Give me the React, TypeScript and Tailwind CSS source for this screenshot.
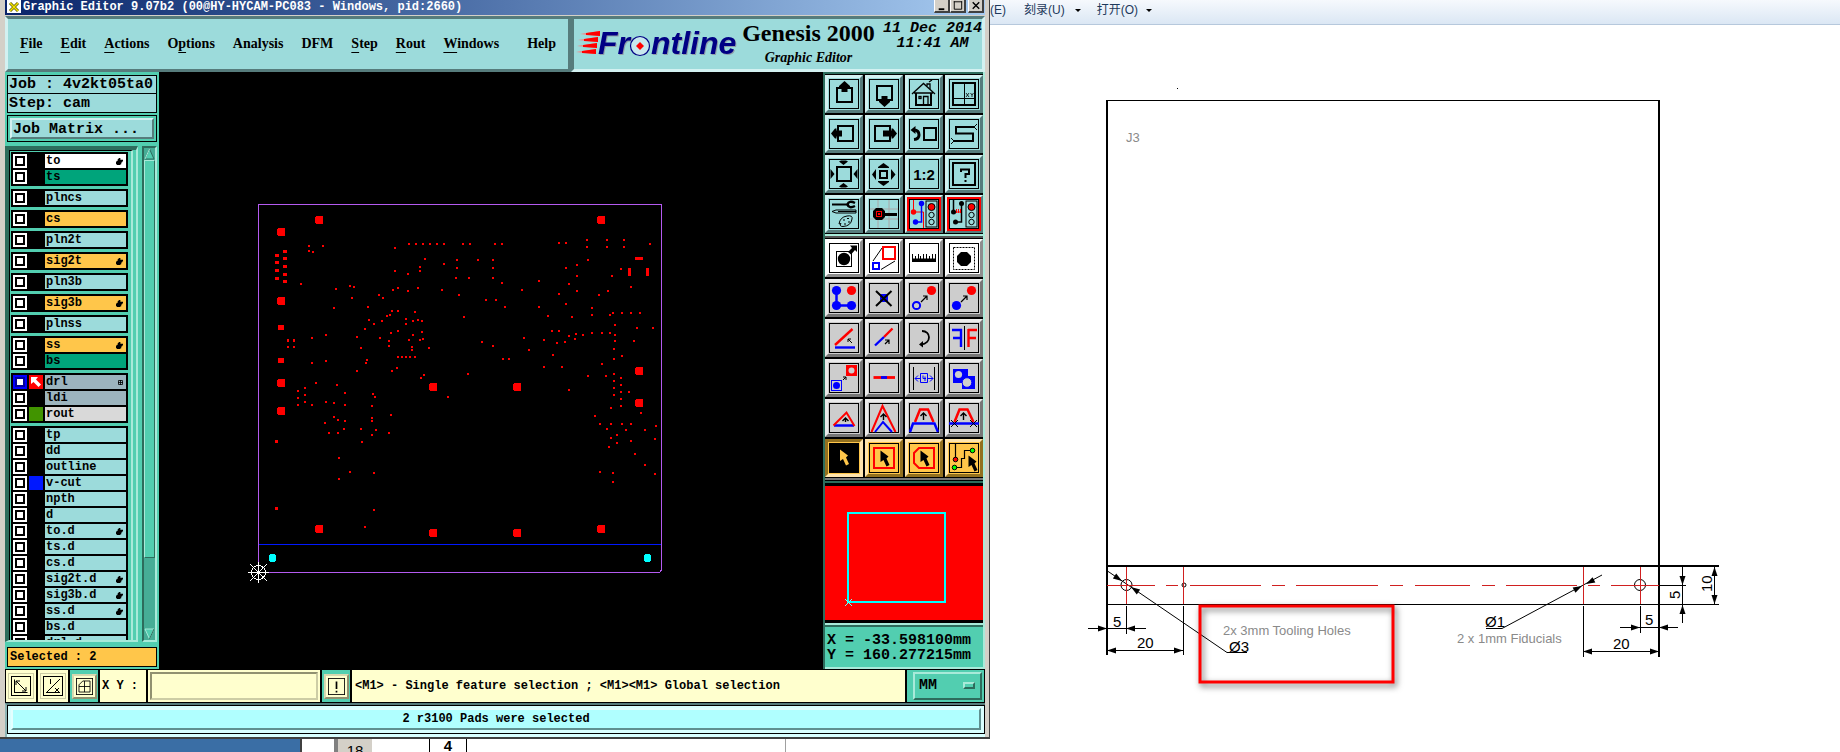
import type { ReactNode } from 'react';

type Layer = {
  name: string;
  tone?: string;
  swatch?: string;
  mark?: 'hand' | 'grid';
  active?: boolean;
};

const WHITE = 'bg-white';
const GREEN = 'bg-[#00a47b]';
const AMBER = 'bg-[#ffc64a]';
const SLATE = 'bg-[#9cb4be]';

const layerGroups: Layer[][] = [
  [
    { name: 'to', tone: WHITE, mark: 'hand' },
    { name: 'ts', tone: GREEN },
  ],
  [{ name: 'plncs' }],
  [{ name: 'cs', tone: AMBER }],
  [{ name: 'pln2t' }],
  [{ name: 'sig2t', tone: AMBER, mark: 'hand' }],
  [{ name: 'pln3b' }],
  [{ name: 'sig3b', tone: AMBER, mark: 'hand' }],
  [{ name: 'plnss' }],
  [
    { name: 'ss', tone: AMBER, mark: 'hand' },
    { name: 'bs', tone: GREEN },
  ],
  [
    { name: 'drl', tone: SLATE, swatch: 'bg-[#ff0000]', mark: 'grid', active: true },
    { name: 'ldi', tone: SLATE },
    { name: 'rout', tone: 'bg-[#d9d9d9]', swatch: 'bg-[#419400]' },
  ],
  [
    { name: 'tp' },
    { name: 'dd' },
    { name: 'outline' },
    { name: 'v-cut', swatch: 'bg-[#0018ff]' },
    { name: 'npth' },
    { name: 'd' },
    { name: 'to.d', mark: 'hand' },
    { name: 'ts.d' },
    { name: 'cs.d' },
    { name: 'sig2t.d', mark: 'hand' },
    { name: 'sig3b.d', mark: 'hand' },
    { name: 'ss.d', mark: 'hand' },
    { name: 'bs.d' },
    { name: 'drl.d' },
  ],
];

// [before, underlined, after]
const menus: [string, string, string][] = [
  ['', 'F', 'ile'],
  ['', 'E', 'dit'],
  ['', 'A', 'ctions'],
  ['O', 'p', 'tions'],
  ['Analysis', '', ''],
  ['DFM', '', ''],
  ['', 'S', 'tep'],
  ['', 'R', 'out'],
  ['', 'W', 'indows'],
];

// Drill hits, three plot units to a pixel
const westHits = [
  [207, 168], [249, 168], [207, 183], [219, 186], [183, 282], [288, 297], [330, 288], [342, 291],
  [336, 324], [282, 354], [384, 351], [387, 390], [402, 402], [375, 417], [351, 441], [363, 474],
  [216, 444], [258, 435], [162, 471], [144, 471], [216, 519], [258, 513], [381, 510], [378, 519],
  [351, 543], [228, 579], [291, 585], [315, 609], [315, 645], [195, 594], [195, 615], [195, 636],
  [174, 603], [174, 624], [174, 645], [216, 645], [258, 636], [282, 639], [282, 681], [294, 690],
  [315, 693], [255, 699], [312, 717], [267, 729], [294, 729], [363, 717], [396, 648], [396, 684],
  [396, 693], [408, 720], [396, 735], [366, 756], [399, 612], [405, 621], [453, 675], [447, 729],
  [297, 804], [330, 846], [297, 867], [402, 849], [402, 960], [375, 1011], [465, 174], [507, 162],
  [528, 162], [549, 162], [570, 162], [591, 162], [612, 162], [555, 207], [612, 222], [540, 231],
  [540, 243], [465, 243], [504, 252], [459, 300], [474, 294], [504, 303], [534, 294], [606, 300],
  [417, 315], [429, 324], [456, 363], [474, 363], [441, 378], [450, 375], [525, 366], [426, 393],
  [498, 387], [498, 402], [519, 393], [534, 390], [546, 393], [474, 423], [453, 429], [420, 444],
  [447, 453], [447, 468], [519, 435], [546, 426], [507, 450], [540, 450], [549, 447], [516, 471],
  [516, 480], [567, 474], [474, 501], [486, 501], [498, 501], [510, 501], [525, 501], [471, 534],
  [456, 543], [552, 555], [543, 564], [624, 621],
];

const eastHits = [
  [327, 159], [348, 159], [411, 150], [411, 171], [471, 150], [471, 171], [522, 150], [522, 171],
  [600, 162], [21, 210], [21, 234], [18, 264], [57, 264], [84, 210], [129, 210], [129, 234],
  [129, 264], [156, 279], [27, 315], [108, 330], [138, 330], [165, 351], [42, 381], [216, 300],
  [267, 273], [267, 351], [294, 378], [327, 312], [348, 342], [357, 282], [348, 234], [381, 225],
  [381, 258], [381, 303], [414, 210], [366, 381], [447, 315], [474, 303], [486, 258], [513, 237],
  [543, 291], [426, 354], [426, 375], [480, 375], [489, 369], [516, 369], [543, 369], [570, 369],
  [495, 405], [561, 414], [609, 414], [306, 423], [327, 423], [222, 444], [282, 450], [321, 459],
  [345, 456], [357, 438], [378, 432], [375, 447], [399, 435], [426, 429], [456, 429], [480, 429],
  [495, 435], [495, 453], [552, 453], [96, 456], [129, 468], [159, 507], [177, 507], [237, 480],
  [309, 495], [282, 531], [336, 531], [492, 477], [492, 507], [516, 498], [456, 522], [54, 552],
  [414, 558], [468, 558], [492, 552], [492, 573], [492, 594], [492, 615], [513, 564], [513, 585],
  [513, 606], [513, 627], [513, 648], [537, 606], [357, 600], [483, 654], [573, 669], [435, 678],
  [450, 702], [483, 702], [516, 702], [543, 702], [471, 717], [528, 720], [585, 720], [618, 708],
  [501, 735], [483, 744], [501, 759], [543, 753], [615, 747], [477, 771], [555, 792], [585, 825],
  [615, 852], [450, 846], [489, 849], [489, 876], [39, 163], [59, 163], [134, 163], [155, 163],
];

const bigPads = [
  [319, 220], [281, 232], [281, 301], [281, 383], [281, 411], [433, 387], [517, 387], [601, 220],
  [639, 371], [639, 403], [319, 529], [433, 533], [517, 533], [601, 529],
];

const slotPads = [
  [285, 251], [277, 255], [285, 258], [277, 262], [285, 266], [277, 270], [285, 274], [277, 278],
  [285, 281],
];

function Stroke({ children }: { children: ReactNode }) {
  return (
    <g fill="none" stroke="#000" strokeWidth={2}>
      {children}
    </g>
  );
}

function Cursor({ x, y, fill = '#000' }: { x: number; y: number; fill?: string }) {
  return (
    <path
      d="M0 0 L8 6 L6 8 L9 14.5 L6 16 L3 9.5 L0 11.5 Z"
      transform={`translate(${x} ${y})`}
      fill={fill}
    />
  );
}

function TrafficLight() {
  return (
    <g fill="none" stroke="#000">
      <rect x={17} y={2} width={11} height={26} />
      <circle cx={22.5} cy={8} r={3.5} fill="#f00" />
      <circle cx={22.5} cy={16} r={2.7} />
      <circle cx={22.5} cy={23} r={2.7} />
    </g>
  );
}

function DiagonalArrow({ x, y, size = 6 }: { x: number; y: number; size?: number }) {
  return (
    <path
      d={`M${x} ${y} l${size} -${size} m-4 0 h4 v4`}
      fill="none"
      stroke="#000"
      strokeWidth={1.2}
    />
  );
}

function UpArrow({ x, y, h }: { x: number; y: number; h: number }) {
  return (
    <path
      d={`M${x} ${y + h} v-${h} m-3 3 l3 -3 l3 3`}
      fill="none"
      stroke="#000"
      strokeWidth={1.4}
    />
  );
}

type Tool = { label: string; icon: ReactNode; alert?: boolean; pressed?: boolean };

const viewTools: Tool[] = [
  {
    label: 'Pan up',
    icon: (
      <>
        <Stroke><rect x={8} y={9} width={15} height={14} /></Stroke>
        <path d="M15.5 2 L21 7 V8 H18.5 V13 H12.5 V8 H10 V7 Z" />
      </>
    ),
  },
  {
    label: 'Pan down',
    icon: (
      <>
        <Stroke><rect x={8} y={7} width={15} height={14} /></Stroke>
        <path d="M15.5 28 L21 23 V22 H18.5 V17 H12.5 V22 H10 V23 Z" />
      </>
    ),
  },
  {
    label: 'Home',
    icon: (
      <g fill="none" stroke="#000" strokeWidth={1.3}>
        <path d="M3 15 L14.5 4.5 L26 15 M5 14 H24" />
        <path d="M18 7 V5 H21 V10 M20 3 l3 -2" />
        <path d="M7 14 V26 H22 V14" strokeWidth={2} />
        <rect x={10} y={17.5} width={2} height={2} />
        <path d="M14.5 26 V17.5 H19 V26" />
      </g>
    ),
  },
  {
    label: 'Coordinates',
    icon: (
      <>
        <Stroke><rect x={4} y={4} width={22} height={22} /></Stroke>
        <path d="M15.5 4 V26 M4 19.5 H26" stroke="#000" />
        <path d="M17 14 l3 4 m0 -4 l-3 4 M21.5 14 l1.5 2 v2 m0 -2 l1.5 -2" stroke="#000" strokeWidth={0.8} fill="none" />
      </>
    ),
  },
  {
    label: 'Pan left',
    icon: (
      <>
        <Stroke><rect x={9} y={7} width={15} height={15} /></Stroke>
        <path d="M2 14.5 L6 9.5 H7.5 V11.5 H13 V17.5 H7.5 V19.5 H6 Z" />
      </>
    ),
  },
  {
    label: 'Pan right',
    icon: (
      <>
        <Stroke><rect x={6} y={7} width={15} height={15} /></Stroke>
        <path d="M28 14.5 L24 9.5 H22.5 V11.5 H14 V17.5 H22.5 V19.5 H24 Z" />
      </>
    ),
  },
  {
    label: 'Previous view',
    icon: (
      <>
        <Stroke>
          <rect x={15} y={9} width={12} height={12} />
          <path d="M5 11 Q10 11 10 16 Q10 20 5 20.5" strokeWidth={3} />
        </Stroke>
        <path d="M1.5 11 L6.5 7 V15 Z" />
      </>
    ),
  },
  {
    label: 'Serpentine',
    icon: (
      <Stroke>
        <path d="M25 8 H7 V14.5 H24 V22 H5" />
        <path d="M28 5 L25 8 L28 11 M2 19 L5 22 L2 25" strokeWidth={1} />
      </Stroke>
    ),
  },
  {
    label: 'Zoom in',
    icon: (
      <>
        <Stroke><rect x={8} y={8} width={14} height={14} /></Stroke>
        <path d="M10 2.5 L12 1.5 H17 L19 2.5 L14.5 6 Z M10 27.5 L12 28.5 H17 L19 27.5 L14.5 24 Z M1.5 10 V20 L5.5 15 Z M28.5 10 V20 L24.5 15 Z" />
      </>
    ),
  },
  {
    label: 'Zoom out',
    icon: (
      <>
        <Stroke><rect x={11} y={12} width={7} height={7} /></Stroke>
        <path d="M9 8 L14.5 4 L20 8 V9 H9 Z M9 23 L14.5 27 L20 23 V22 H9 Z M7 10 L3 15.5 L7 21 Z M22 10 L26.5 15.5 L22 21 Z" />
      </>
    ),
  },
  {
    label: 'Scale 1:2',
    icon: (
      <text x={15} y={20.5} textAnchor="middle" fontSize={15} fontWeight={700} fontFamily="Liberation Sans">
        1:2
      </text>
    ),
  },
  {
    label: 'Help',
    icon: (
      <Stroke>
        <rect x={4} y={4} width={22} height={22} />
        <path d="M12 13 V10.5 H20 V15 H16.5 V19 M16.5 21 V23" />
      </Stroke>
    ),
  },
  {
    label: 'Setup',
    icon: (
      <g fill="none" stroke="#000">
        <path d="M3 5.5 H19" strokeWidth={2} />
        <path d="M26 4 Q20 1 18.5 5.5 Q20 10 26 7" strokeWidth={2.5} />
        <path d="M3 12.5 L7 11 H27 V14 H7 Z M9 12.5 H27" />
        <path d="M10 25 Q11 18 18 17 Q24 16 23 20 Q22 27 14 27.5 Q10 27.5 12 24.5 Z" />
        <path d="M14 21 h2 M18 19.5 h2 M19 23 h2 M15 25 h2" />
      </g>
    ),
  },
  {
    label: 'Snap grid',
    icon: (
      <>
        <path d="M9 1 V29 M20 1 V29 M1 10 H29 M1 20 H29" stroke="#a8a8a8" />
        <path d="M4 12 L7 9 H13 L16 12 V14 H28 V17 H16 V18 L13 21 H7 L4 18 Z" />
        <rect x={7.5} y={12.5} width={5} height={5} fill="none" stroke="#f00" />
        <rect x={9} y={14} width={2} height={2} fill="#f00" />
      </>
    ),
  },
  {
    label: 'Net colours',
    alert: true,
    icon: (
      <>
        <path d="M4.5 1 V12 M5 13 H14.5 V29" fill="none" stroke="#f00" />
        <path d="M12.5 5 V23 H7" fill="none" stroke="#00f" strokeWidth={1.5} />
        <circle cx={4.5} cy={13} r={2.7} fill="#f00" />
        <circle cx={12.5} cy={4.5} r={2.7} fill="#00f" />
        <circle cx={6.5} cy={23} r={2.7} fill="#00f" />
        <TrafficLight />
      </>
    ),
  },
  {
    label: 'Net check',
    alert: true,
    icon: (
      <>
        <path d="M4.5 1 V13 M12.5 5 V23 H7" fill="none" stroke="#000" strokeWidth={1.5} />
        <path d="M5 13 H12 M7.5 10 V14 M9.5 10 V14 M11.5 10 V14" stroke="#f00" />
        <circle cx={4.5} cy={13} r={2.5} />
        <circle cx={12.5} cy={4.5} r={2.5} />
        <circle cx={6.5} cy={23} r={2.5} />
        <TrafficLight />
      </>
    ),
  },
];

const measureTools: Tool[] = [
  {
    label: 'Move pad',
    icon: (
      <>
        <rect x={7.5} y={8.5} width={15} height={15} fill="none" stroke="#000" />
        <circle cx={15} cy={16} r={6.2} />
        <path d="M19 9 L23 5 L21 2.5 H28 V9 L26 7 L22 11.5 Z" />
      </>
    ),
  },
  {
    label: 'Resize',
    icon: (
      <>
        <path d="M13 5 L4 18 M26 18 L12 26.5" stroke="#000" />
        <rect x={14} y={4} width={12} height={12} fill="none" stroke="#f00" strokeWidth={2} />
        <rect x={4} y={20} width={6} height={6} fill="none" stroke="#00f" strokeWidth={2} />
      </>
    ),
  },
  {
    label: 'Ruler',
    icon: (
      <>
        <path d="M3 15.5 H27 V19 H3 Z" />
        <path d="M3.5 11 V16 M6.5 13 V16 M9.5 11 V16 M11.5 13 V16 M14.5 11 V16 M17.5 11 V16 M20.5 13 V16 M23.5 11 V16 M26.5 11 V16" stroke="#000" />
      </>
    ),
  },
  {
    label: 'Select pad',
    icon: (
      <>
        <rect x={4.5} y={4.5} width={21} height={22} fill="none" stroke="#000" strokeDasharray="2 1" />
        <path d="M12 9 H18 L22 13 V19 L18 23 H12 L8 19 V13 Z" />
      </>
    ),
  },
];

const editTools: Tool[] = [
  {
    label: 'Copy nodes',
    icon: (
      <>
        <path d="M7.5 7.5 V22.5 H22.5" stroke="#00f" strokeWidth={2.5} fill="none" />
        <circle cx={7.5} cy={7.5} r={4.6} fill="#00f" />
        <circle cx={7.5} cy={22.5} r={4.6} fill="#00f" />
        <circle cx={22.5} cy={22.5} r={4.6} fill="#00f" />
        <circle cx={22.5} cy={7.5} r={4.6} fill="#f00" />
      </>
    ),
  },
  {
    label: 'Delete',
    icon: (
      <>
        <rect x={11} y={11} width={8} height={8} fill="#00f" />
        <path d="M7 8 L22.5 23 M22.5 8 L7 23" stroke="#000" strokeWidth={2} />
      </>
    ),
  },
  {
    label: 'Move point',
    icon: (
      <>
        <circle cx={22.5} cy={7.5} r={4.6} fill="#f00" />
        <circle cx={7.5} cy={22.5} r={3.6} fill="none" stroke="#00f" strokeWidth={2} />
        <DiagonalArrow x={12} y={19} />
      </>
    ),
  },
  {
    label: 'Copy point',
    icon: (
      <>
        <circle cx={22.5} cy={7.5} r={4.6} fill="#f00" />
        <circle cx={7.5} cy={22.5} r={4.6} fill="#00f" />
        <DiagonalArrow x={12} y={19} />
      </>
    ),
  },
  {
    label: 'Angle',
    icon: (
      <>
        <path d="M6 22 L23.5 6" stroke="#f00" strokeWidth={2.4} />
        <path d="M6 24.5 H26" stroke="#00f" strokeWidth={2.4} />
        <path d="M23 20 l-4 -4 m0 3 v-3 h3" stroke="#000" fill="none" />
      </>
    ),
  },
  {
    label: 'Extend line',
    icon: (
      <>
        <path d="M15 14 L23.5 5.5" stroke="#f00" strokeWidth={2.4} />
        <path d="M6 22.5 L15 14" stroke="#00f" strokeWidth={2.4} />
        <DiagonalArrow x={16} y={21} size={4} />
      </>
    ),
  },
  {
    label: 'Rotate',
    icon: (
      <>
        <path d="M13 8 C22 8 23 20 12 21.5" stroke="#000" strokeWidth={1.8} fill="none" />
        <path d="M14 18 L10 21.5 L14 24.5 Z" />
      </>
    ),
  },
  {
    label: 'Mirror',
    icon: (
      <>
        <path d="M3 7 H13 M4 15 H13 M12 6 V24" stroke="#00f" strokeWidth={2.4} fill="none" />
        <path d="M15.5 3 V27" stroke="#000" />
        <path d="M28 7 H19 M27 15 H19 M19.5 6 V24" stroke="#f00" strokeWidth={2.4} fill="none" />
      </>
    ),
  },
  {
    label: 'Substitute',
    icon: (
      <>
        <rect x={17} y={2} width={11} height={11} fill="#f00" />
        <circle cx={22.5} cy={7.5} r={3} fill="#cdcdcd" />
        <rect x={2.5} y={17.5} width={10} height={10} fill="none" stroke="#00f" />
        <circle cx={7.5} cy={22.5} r={3.5} fill="#00f" />
        <path d="M14 17 l3 -3 m-3 0 h3 v3" fill="none" stroke="#000" />
      </>
    ),
  },
  {
    label: 'Break line',
    icon: (
      <>
        <path d="M4.5 14.5 H26" stroke="#f00" strokeWidth={2.8} />
        <path d="M12 14.5 H18" stroke="#00f" strokeWidth={2.8} />
      </>
    ),
  },
  {
    label: 'Spacing',
    icon: (
      <>
        <path d="M4.5 4 V27 M25.5 4 V27" stroke="#000" />
        <path d="M6 15.5 H11 M9 12.5 l-3 3 l3 3 M24 15.5 H19 M21 12.5 l3 3 l-3 3 M11.5 10.5 H18.5 V19.5 H11.5 Z M14 12.5 V15.5 H17 M16 13.5 V18" stroke="#00f" fill="none" />
      </>
    ),
  },
  {
    label: 'Merge surface',
    icon: (
      <>
        <path d="M4 6 H19 V13 H26 V26 H13 V20 H4 Z" fill="#00f" />
        <circle cx={9.5} cy={11.5} r={3.6} fill="#cdcdcd" />
        <circle cx={18} cy={19.5} r={4.8} fill="#cdcdcd" stroke="#00f" />
      </>
    ),
  },
  {
    label: 'Stretch corner',
    icon: (
      <>
        <path d="M5 22.5 H25" stroke="#00f" strokeWidth={2.5} />
        <path d="M4.5 22.5 L17.5 9.5 L25.5 23" stroke="#f00" strokeWidth={2} fill="none" />
        <UpArrow x={16.5} y={15} h={4} />
      </>
    ),
  },
  {
    label: 'Stretch peak',
    icon: (
      <>
        <path d="M6 29 L14 19 L23 29" stroke="#00f" strokeWidth={2} fill="none" />
        <path d="M2.5 29 L13.5 3 L26.5 29" stroke="#f00" strokeWidth={2} fill="none" />
        <UpArrow x={14.5} y={11} h={6} />
      </>
    ),
  },
  {
    label: 'Stretch segment',
    icon: (
      <>
        <path d="M6 19 L11 6.5 H19 L24.5 19" stroke="#f00" strokeWidth={2.5} fill="none" />
        <path d="M1 29 L4 20.5 H25.5 L29 29" stroke="#00f" strokeWidth={2.5} fill="none" />
        <UpArrow x={14.5} y={10} h={7} />
      </>
    ),
  },
  {
    label: 'Stretch parallel',
    icon: (
      <>
        <path d="M5.5 19 L10.5 6.5 H18.5 L24.5 19" stroke="#f00" strokeWidth={2.5} fill="none" />
        <path d="M0 20.5 H30" stroke="#00f" strokeWidth={2.5} />
        <path d="M2 17 l7 7 m0 -7 l-7 7 M21 17 l7 7 m0 -7 l-7 7" stroke="#000" />
        <UpArrow x={14.5} y={10} h={7} />
      </>
    ),
  },
];

const selectTools: Tool[] = [
  {
    label: 'Select single',
    pressed: true,
    icon: (
      <>
        <rect width={30} height={30} />
        <Cursor x={11} y={6.5} fill="#ffc64a" />
      </>
    ),
  },
  {
    label: 'Select in frame',
    icon: (
      <>
        <rect x={5} y={5} width={20} height={20} fill="none" stroke="#f00" strokeWidth={2} />
        <Cursor x={11.5} y={7.5} />
      </>
    ),
  },
  {
    label: 'Select in polygon',
    icon: (
      <>
        <path d="M10 5 H25 V25 H10 L5 20 V10 Z" fill="none" stroke="#f00" strokeWidth={2} />
        <Cursor x={11.5} y={7.5} />
      </>
    ),
  },
  {
    label: 'Select net',
    icon: (
      <>
        <path d="M6.5 1 V16 M6 24.5 H12.5 V15.5 H15.5 V7.5 H24" fill="none" stroke="#000" strokeWidth={1.2} />
        <circle cx={6.5} cy={16.5} r={2.3} fill="#f00" stroke="#000" />
        <circle cx={5.5} cy={24.5} r={2.3} fill="#0f0" stroke="#000" />
        <circle cx={23.5} cy={7.5} r={2.3} fill="#0f0" stroke="#000" />
        <Cursor x={19.5} y={12.5} />
      </>
    ),
  },
];

const toolTone = {
  aqua: 'bg-[#9cdbdb] border-t-[#d3f1f1] border-l-[#d3f1f1] border-b-[#567c7c] border-r-[#567c7c]',
  white: 'bg-white border-t-white border-l-white border-b-[#8e8e8e] border-r-[#8e8e8e]',
  grey: 'bg-[#cdcdcd] border-t-[#ececec] border-l-[#ececec] border-b-[#777777] border-r-[#777777]',
  amber: 'bg-[#ffc64a] border-t-[#ffe5ae] border-l-[#ffe5ae] border-b-[#92701f] border-r-[#92701f]',
};

const pressedTone =
  'bg-[#ffc64a] border-t-[#92701f] border-l-[#92701f] border-b-[#ffe5ae] border-r-[#ffe5ae]';

function ToolGrid({ tools, tone }: { tools: Tool[]; tone: keyof typeof toolTone }) {
  return (
    <div className="grid grid-cols-4 gap-[2px]">
      {tools.map((tool) => (
        <button
          key={tool.label}
          type="button"
          aria-label={tool.label}
          className={`flex h-[38px] items-center justify-center border-3 ${
            tool.pressed ? pressedTone : toolTone[tone]
          }`}
        >
          <svg
            viewBox="0 0 30 30"
            className={
              tool.alert
                ? 'size-[30px] shrink-0 outline-2 outline-[#ff0000]'
                : 'size-[30px] shrink-0'
            }
          >
            <rect x={0.5} y={0.5} width={29} height={29} fill="none" stroke="#000" />
            {tool.icon}
          </svg>
        </button>
      ))}
    </div>
  );
}

function TitleBar() {
  return (
    <header className="flex h-[15px] items-start bg-linear-to-r from-[#0a246a] to-[#a6caf0] pr-px pl-[2px]">
      <svg viewBox="0 0 14 13" className="mr-[2px] h-[13px] w-[14px]">
        <rect width={14} height={13} fill="#fff" />
        <path d="M3 3 L11 11 M11 3 L3 11" stroke="#5c5c00" strokeWidth={3} />
        <path d="M3 3 L11 11 M11 3 L3 11" stroke="#f4e200" strokeWidth={1.5} />
      </svg>
      <h1 className="flex-1 text-[12px] leading-[14px] font-bold whitespace-nowrap text-white">
        Graphic Editor 9.07b2 (00@HY-HYCAM-PC083 - Windows, pid:2660)
      </h1>
      <WindowButton label="Minimize">
        <path d="M4 9.5 H10" stroke="#000" strokeWidth={2} />
      </WindowButton>
      <WindowButton label="Maximize">
        <path d="M3.5 1 V9.5 H11.5 V1 M3 1.5 H12" stroke="#000" fill="none" />
      </WindowButton>
      <span className="w-[2px]" />
      <WindowButton label="Close">
        <path d="M4 2 L11 9 M11 2 L4 9" stroke="#000" strokeWidth={1.5} />
      </WindowButton>
    </header>
  );
}

function WindowButton({ label, children }: { label: string; children: ReactNode }) {
  return (
    <button
      type="button"
      aria-label={label}
      className="h-[13px] w-[16px] border-r-2 border-b-2 border-l border-r-[#404040] border-b-[#404040] border-l-white bg-[#d4d0c8]"
    >
      <svg viewBox="0 0 14 11" className="h-[11px] w-[13px]">
        {children}
      </svg>
    </button>
  );
}

function FrontlineLogo() {
  return (
    <svg viewBox="0 -4 164 40" className="h-[40px] w-[164px] shrink-0">
      <path d="M4 6 L24 3 V8 Z M2 12 L22 9 V14 Z M1 18 L21 15 V20 Z M0 24 L20 21 V26 Z" fill="#ff7a7a" />
      <path d="M10 5 L24 3 V8 L10 7 Z M8 11 L22 9 V14 L8 13 Z M7 17 L21 15 V20 L7 19 Z M6 23 L20 21 V26 L6 25 Z" fill="#f00" />
      <g
        fontFamily="Liberation Sans"
        fontSize={32}
        fontWeight={700}
        fontStyle="italic"
        fill="#000084"
        className="drop-shadow-[1px_1px_0_#8f9fa8]"
      >
        <text x={22} y={26}>Fr</text>
        <text x={75} y={26}>ntline</text>
      </g>
      <circle cx={64} cy={18} r={9.5} fill="#c8e8ee" stroke="#000084" strokeWidth={1.2} />
      <path d="M64 14 L68 18 L64 22 L60 18 Z" fill="#f00" />
    </svg>
  );
}

function MenuRow() {
  return (
    <div className="grid h-[56px] grid-cols-[283fr_207fr] bg-[#9cdbdb]">
      <nav className="flex items-center gap-[18px] border-3 border-t-[#567c7c] border-r-[#567c7c] border-b-[#567c7c] border-l-[#d3f1f1] px-[12px] pb-px font-['Liberation_Serif',serif] text-[14px] font-bold">
        {menus.map(([before, key, after]) => (
          <button key={before + key + after} type="button">
            {before}
            <span className="underline underline-offset-4">{key}</span>
            {after}
          </button>
        ))}
        <button type="button" className="ml-auto">
          Help
        </button>
      </nav>
      <div className="flex items-center border-3 border-t-[#567c7c] border-r-[#d3f1f1] border-b-[#d3f1f1] border-l-[#567c7c] pl-[2px]">
        <FrontlineLogo />
        <div className="flex-1 pr-[6px] text-center font-['Liberation_Serif',serif] font-bold whitespace-nowrap">
          <p className="text-[24px] leading-[27px]">Genesis 2000</p>
          <p className="text-[14px] leading-[22px] italic">Graphic Editor</p>
        </div>
        <p className="self-start pt-[2px] text-center text-[15px] leading-[15px] font-bold italic">
          11 Dec 2014
          <br />
          11:41 AM
        </p>
      </div>
    </div>
  );
}

function LayerRow({ layer }: { layer: Layer }) {
  return (
    <label className="flex h-[14px] gap-[2px]">
      <input
        type="checkbox"
        className={`size-[14px] shrink-0 appearance-none border-2 bg-white ${
          layer.active
            ? 'border-[#0000ff] shadow-[inset_0_0_0_2px_#00009c]'
            : 'border-white shadow-[inset_0_0_0_2px_#000]'
        }`}
      />
      <span className={`size-[14px] shrink-0 ${layer.swatch ?? 'bg-black'}`}>
        {layer.active && (
          <svg viewBox="0 0 14 14">
            <path d="M2 2 H9 L7 4.5 L12 9.5 L9.5 12 L4.5 7 L2 9 Z" fill="#fff" />
          </svg>
        )}
      </span>
      <span
        className={`flex flex-1 items-center justify-between pr-[3px] pl-px text-[12px] leading-[14px] font-bold ${
          layer.tone ?? 'bg-[#9cdbdb]'
        }`}
      >
        {layer.name}
        {layer.mark === 'hand' && (
          <svg viewBox="0 0 8 8" className="size-[7px]">
            <path d="M3 0 H5 V2 H8 V4 H7 V5 H6 V7 H5 V8 H1 V7 H0 V4 H1 V3 H2 V1 H3 Z" />
          </svg>
        )}
        {layer.mark === 'grid' && (
          <svg viewBox="0 0 5 5" className="size-[5px]">
            <path d="M0.5 0.5 H4.5 V4.5 H0.5 Z M2.5 0 V5 M0 2.5 H5" fill="none" stroke="#000" strokeWidth={0.8} />
          </svg>
        )}
      </span>
    </label>
  );
}

function Sidebar() {
  return (
    <aside className="flex w-[154px] shrink-0 flex-col bg-[#52ceb0] px-[2px] pt-[3px] pb-[2px] font-bold">
      <p className="h-[19px] border border-black bg-[#9cdbdb] pl-px text-[15px] leading-[17px]">
        Job : 4v2kt05ta0
      </p>
      <p className="h-[19px] border-x border-b border-black bg-[#9cdbdb] pl-px text-[15px] leading-[19px]">
        Step: cam
      </p>
      <div className="mt-[2px] h-[27px] border border-black p-[2px]">
        <button
          type="button"
          className="block h-full w-full border-2 border-t-[#d3f1f1] border-r-[#567c7c] border-b-[#567c7c] border-l-[#d3f1f1] bg-[#9cdbdb] pl-px text-left text-[15px] leading-[19px]"
        >
          Job Matrix ...
        </button>
      </div>
      <div className="mt-[4px] -ml-[2px] flex h-[496px] gap-[4px]">
        <div className="flex flex-1 border-t-4 border-r-2 border-b-2 border-l-4 border-t-[#2d6c5c] border-r-[#a8ead9] border-b-[#a8ead9] border-l-[#2d6c5c] pr-[3px]">
          <div className="flex-1 overflow-hidden border-t border-r-2 border-l border-t-black border-r-[#a8ead9] border-l-black pt-px pr-[3px] pl-px">
            {layerGroups.map((group) => (
              <div key={group[0].name} className="mb-[3px] flex flex-col gap-[2px] bg-black p-[2px]">
                {group.map((layer) => (
                  <LayerRow key={layer.name} layer={layer} />
                ))}
              </div>
            ))}
          </div>
        </div>
        <div className="flex w-[15px] flex-col border-2 border-t-[#2d6c5c] border-r-[#a8ead9] border-b-[#a8ead9] border-l-[#2d6c5c] bg-[#46ad96]">
          <svg viewBox="0 0 11 12" className="h-[12px] w-[11px]">
            <path d="M5.5 1 L10 11 H1 Z" fill="#52ceb0" stroke="#2d6c5c" />
            <path d="M5.5 1 L1 11" stroke="#a8ead9" />
          </svg>
          <div className="h-[398px] border border-t-[#a8ead9] border-r-[#2d6c5c] border-b-[#2d6c5c] border-l-[#a8ead9] bg-[#52ceb0]" />
          <svg viewBox="0 0 11 12" className="mt-auto h-[12px] w-[11px]">
            <path d="M5.5 11 L10 1 H1 Z" fill="#52ceb0" stroke="#a8ead9" />
            <path d="M5.5 11 L10 1" stroke="#2d6c5c" />
          </svg>
        </div>
      </div>
      <p className="mt-auto h-[20px] border border-black bg-[#ffc64a] pl-[2px] text-[12px] leading-[18px]">
        Selected : 2
      </p>
    </aside>
  );
}

function BoardCanvas() {
  return (
    <main className="flex-1 bg-black">
      <svg viewBox="159 72 664 597" className="block h-full w-full" shapeRendering="crispEdges">
        <path d="M258.5 204.5 H661.5 V570 L659.5 572.5 H258.5 Z" fill="none" stroke="#b45af0" />
        <path d="M259 544.5 H661" stroke="#0018ff" />
        <g fill="#f00">
          <g transform="translate(240 190) scale(.33333333)">
            {westHits.map(([x, y]) => (
              <rect key={`${x}-${y}`} x={x - 3} y={y - 3} width={6} height={6} />
            ))}
          </g>
          <g transform="translate(450 190) scale(.33333333)">
            {eastHits.map(([x, y]) => (
              <rect key={`${x}-${y}`} x={x - 3} y={y - 3} width={6} height={6} />
            ))}
          </g>
          {slotPads.map(([x, y]) => (
            <rect key={y} x={x - 2} y={y - 1} width={4} height={3} />
          ))}
          <rect x={278} y={325} width={6} height={5} />
          <rect x={278} y={358} width={6} height={5} />
          <rect x={275} y={440} width={3} height={3} />
          <rect x={275} y={507} width={3} height={3} />
          <rect x={287} y={339} width={2} height={3} />
          <rect x={293} y={339} width={2} height={3} />
          <rect x={635} y={257} width={8} height={3} />
          <rect x={628} y={268} width={3} height={8} />
          <rect x={646} y={268} width={3} height={8} />
          {bigPads.map(([x, y]) => (
            <path key={`${x}-${y}`} d={`M${x - 3} ${y - 4} h6 l1 1 v6 l-1 1 h-6 l-1 -1 v-6 Z`} />
          ))}
        </g>
        <path d="M270 554 h4 l2 2 v4 l-2 2 h-4 l-1 -2 v-4 Z" fill="#0ff" />
        <path d="M645 554 h4 l2 2 v4 l-2 2 h-4 l-1 -2 v-4 Z" fill="#0ff" />
        <g fill="none" stroke="#fff">
          <path d="M248 572.5 H269 M258.5 562 V583 M250 564 L267 581 M267 564 L250 581" />
          <circle cx={258.5} cy={572.5} r={7} />
        </g>
      </svg>
    </main>
  );
}

function ToolPanel() {
  return (
    <section aria-label="Tools" className="flex w-[162px] shrink-0 flex-col border-r-2 border-l-2 border-r-[#a8ead9] border-l-[#2d6c5c] bg-black">
      <div className="border-t-2 border-b-2 border-t-[#2d6c5c] border-b-[#a8ead9] pt-px pb-px">
        <ToolGrid tools={viewTools} tone="aqua" />
      </div>
      <div className="flex flex-col gap-[2px] border-t-2 border-b-2 border-t-[#555555] border-b-[#777777] pt-px pb-px">
        <ToolGrid tools={measureTools} tone="white" />
        <ToolGrid tools={editTools} tone="grey" />
        <ToolGrid tools={selectTools} tone="amber" />
      </div>
      <div className="mt-px border-t-2 border-b-2 border-t-[#2d6c5c] border-b-[#a8ead9] py-[3px]">
        <svg viewBox="0 0 158 134" className="block h-[134px] w-full bg-[#ff0000]">
          <rect x={23} y={27} width={97} height={89} fill="none" stroke="#0ff" strokeWidth={2} />
          <path d="M20 113 l7 7 m0 -7 l-7 7" stroke="#7fe" />
        </svg>
      </div>
      <output className="flex-1 border-t-2 border-b-2 border-t-[#2d6c5c] border-b-[#a8ead9] bg-[#52ceb0] pt-[6px] pl-[2px] text-[15px] leading-[15px] font-bold whitespace-nowrap">
        X = -33.598100mm
        <br />
        Y = 160.277215mm
      </output>
    </section>
  );
}

function CommandButton({ label, teal, children }: { label: string; teal?: boolean; children: ReactNode }) {
  return (
    <button
      type="button"
      aria-label={label}
      className={
        teal
          ? 'flex w-[28px] items-center justify-center bg-[#52ceb0]'
          : 'flex w-[30px] items-center justify-center bg-[#ffffce]'
      }
    >
      <svg
        viewBox="0 0 20 20"
        className={
          teal
            ? 'box-content size-[17px] shrink-0 border-2 border-t-[#d8d8b0] border-r-[#919170] border-b-[#919170] border-l-[#d8d8b0] bg-[#ffffce] p-[2px]'
            : 'box-content size-[20px] shrink-0 border border-[#cdcda5] bg-[#ffffce] p-[2px]'
        }
      >
        <rect x={0.5} y={0.5} width={19} height={19} fill="none" stroke="#000" />
        {children}
      </svg>
    </button>
  );
}

function CommandRow() {
  return (
    <form className="flex h-[34px] gap-[2px] bg-black py-px pl-px text-[12px] font-bold">
      <CommandButton label="Diagonal">
        <path d="M3.5 16.5 V3.5 M3 16.5 H16.5 M5 5 L15 15 M5 9 V5 H9 M15 11 V15 H11" fill="none" stroke="#000" />
      </CommandButton>
      <CommandButton label="Angle">
        <path d="M3 17 L17 3 M3 16.5 H17 M7.5 3 V8 M12 12 l4 4 m0 -4 l-4 4" fill="none" stroke="#000" />
      </CommandButton>
      <CommandButton label="Grid" teal>
        <path d="M3.5 16.5 V8 L8 3.5 H16.5 V16.5 Z M10 3.5 V16.5 M3.5 10 H16.5" fill="none" stroke="#000" />
      </CommandButton>
      <label htmlFor="xy" className="flex w-[46px] items-center bg-[#ffffce] pl-[2px]">
        X Y :
      </label>
      <div className="w-[172px] bg-[#ffffce] p-[2px]">
        <input
          id="xy"
          type="text"
          className="h-full w-full border-2 border-t-[#919170] border-r-[#cdcda5] border-b-[#cdcda5] border-l-[#919170] bg-[#ffffce] px-[4px] outline-none"
        />
      </div>
      <CommandButton label="Alert" teal>
        <path d="M10 4 V13 M10 15 V17" stroke="#000" strokeWidth={2} />
      </CommandButton>
      <p className="flex flex-1 items-center bg-[#ffffce] pl-[3px] whitespace-pre">
        {'<M1> - Single feature selection ; <M1><M1> Global selection'}
      </p>
      <div className="relative mr-px w-[77px] bg-[#52ceb0] py-[2px] pr-[2px] pl-[6px]">
        <select
          aria-label="Units"
          className="h-full w-full appearance-none border-2 border-t-[#a8ead9] border-r-[#2d6c5c] border-b-[#2d6c5c] border-l-[#a8ead9] bg-[#52ceb0] pl-[4px] text-[15px]"
        >
          <option>MM</option>
        </select>
        <span className="pointer-events-none absolute top-[12px] right-[9px] h-[7px] w-[12px] border-2 border-t-[#a8ead9] border-r-[#2d6c5c] border-b-[#2d6c5c] border-l-[#a8ead9]" />
      </div>
    </form>
  );
}

function StatusBar() {
  return (
    <footer className="border-t-2 border-l-2 border-t-[#567c7c] border-l-[#8fb5b5] bg-[#d8ffff] pb-[3px]">
      <div className="border border-black p-[3px] pt-[2px]">
        <p className="h-[22px] border-2 border-t-[#e4ffff] border-r-[#5f9090] border-b-[#5f9090] border-l-[#e4ffff] bg-[#b0ffff] text-center text-[12px] leading-[18px] font-bold">
          2 r3100 Pads were selected
        </p>
      </div>
    </footer>
  );
}

function DesktopStrip() {
  return (
    <div className="flex flex-1 overflow-hidden bg-white font-['Liberation_Sans',sans-serif]">
      <div className="w-[302px] border-r-2 border-[#404040] bg-[#3a6ea5]" />
      <div className="ml-[32px] w-[38px] border-l-4 border-[#808080] bg-[#d4d0c8] pt-[4px] text-center text-[15px] leading-[16px]">
        18
      </div>
      <div className="ml-[57px] w-[38px] border-x border-black text-center text-[15px] leading-[14px] font-bold">
        4
      </div>
      <div className="ml-[318px] border-l border-[#a0a0a0]" />
    </div>
  );
}

function EditorWindow() {
  return (
    <section className="flex min-w-0 flex-col bg-[#d4d0c8] font-['Liberation_Mono',monospace] text-black">
      <div className="border-r border-b-2 border-[#404040]">
        <div className="border-r-4 border-l-5 border-[#d4d0c8]">
          <TitleBar />
          <div className="mt-px">
            <MenuRow />
          </div>
          <div className="flex h-[597px] bg-black">
            <Sidebar />
            <BoardCanvas />
            <ToolPanel />
          </div>
          <CommandRow />
          <StatusBar />
        </div>
      </div>
      <DesktopStrip />
    </section>
  );
}

// Filled arrowhead with its tip at x, y, pointing along `angle` degrees
function Head({ x, y, angle }: { x: number; y: number; angle: number }) {
  return <path d="M0 0 L-9 -3 V3 Z" transform={`translate(${x} ${y}) rotate(${angle})`} fill="#000" />;
}

function MechanicalDrawing() {
  return (
    <svg viewBox="990 25 850 727" className="block w-full font-['Liberation_Sans',sans-serif]">
      <rect x={1177} y={88} width={1} height={1} />
      <g fill="none" stroke="#000">
        <path d="M1107 100.5 H1659" />
        <path d="M1107 566 H1719 M1107 100 V655 M1659 100 V657" strokeWidth={2} />
        <path d="M1107 604.5 H1719 M1126.5 606 V634 M1183.5 606 V655 M1583.5 606 V657 M1640.5 606 V633 M1660 585.5 H1686" />
        <path d="M1088 628.5 H1146 M1107 650.5 H1183 M1620 627.5 H1678 M1583 651.5 H1659 M1682.5 567 V623 M1714.5 566 V604" />
        <path d="M1106 570 L1227 652.5 H1247 M1602 575 L1502 628.5 H1486" />
        <circle cx={1126.5} cy={585} r={5.5} />
        <circle cx={1184} cy={585} r={2} />
        <circle cx={1640} cy={585} r={5.5} />
      </g>
      <g stroke="#d02020">
        <path d="M1107 585.5 H1155 M1166 585.5 H1178 M1190 585.5 H1261 M1272 585.5 H1285 M1296 585.5 H1378 M1390 585.5 H1403 M1415 585.5 H1470 M1482 585.5 H1495 M1506 585.5 H1577 M1588 585.5 H1600 M1611 585.5 H1659" />
        <path d="M1126.5 567 V604 M1183.5 567 V604 M1583.5 567 V604 M1640.5 567 V604" />
      </g>
      <Head x={1122} y={581} angle={34} />
      <Head x={1131} y={587} angle={214} />
      <Head x={1107} y={628.5} angle={0} />
      <Head x={1126} y={628.5} angle={180} />
      <Head x={1107} y={650.5} angle={180} />
      <Head x={1183} y={650.5} angle={0} />
      <Head x={1582} y={586} angle={-28} />
      <Head x={1586} y={584} angle={152} />
      <Head x={1640} y={627.5} angle={0} />
      <Head x={1659} y={627.5} angle={180} />
      <Head x={1583} y={651.5} angle={180} />
      <Head x={1659} y={651.5} angle={0} />
      <Head x={1682.5} y={585} angle={90} />
      <Head x={1682.5} y={605} angle={-90} />
      <Head x={1714.5} y={567} angle={-90} />
      <Head x={1714.5} y={604} angle={90} />
      <g fontSize={15}>
        <text x={1113} y={627}>5</text>
        <text x={1137} y={648}>20</text>
        <text x={1229} y={652}>Ø3</text>
        <text x={1485} y={627}>Ø1</text>
        <text x={1645} y={625}>5</text>
        <text x={1613} y={649}>20</text>
        <text transform="translate(1680 599) rotate(-90)">5</text>
        <text transform="translate(1712 592) rotate(-90)">10</text>
      </g>
      <g fontSize={13} fill="#8a8a8a">
        <text x={1126} y={142}>J3</text>
        <text x={1223} y={635}>2x 3mm Tooling Holes</text>
        <text x={1457} y={643}>2 x 1mm Fiducials</text>
      </g>
      <rect x={1200} y={606} width={193} height={76} fill="none" stroke="#f00" strokeWidth={3} className="drop-shadow-[2px_3px_3px_rgba(0,0,0,0.6)]" />
    </svg>
  );
}

function DrawingViewer() {
  return (
    <section className="min-w-0 bg-white">
      <nav className="flex h-[25px] items-start gap-[16px] border-b border-[#b6c8dc] bg-linear-to-b from-[#f6f9fd] to-[#dbe7f4] pt-[2px] font-['Liberation_Sans','Noto_Sans_CJK_SC',sans-serif] text-[12px] leading-[16px] text-[#1e395b]">
        <button type="button" className="pr-[2px]">
          (E)
        </button>
        <button type="button" className="flex items-center gap-[10px]">
          刻录(U)
          <Caret />
        </button>
        <button type="button" className="flex items-center gap-[8px]">
          打开(O)
          <Caret />
        </button>
      </nav>
      <MechanicalDrawing />
    </section>
  );
}

function Caret() {
  return (
    <svg viewBox="0 0 6 3" className="h-[3px] w-[6px]">
      <path d="M0 0 H6 L3 3 Z" />
    </svg>
  );
}

export default function App() {
  return (
    <div className="grid min-h-screen grid-cols-[99fr_85fr] bg-white">
      <EditorWindow />
      <DrawingViewer />
    </div>
  );
}
